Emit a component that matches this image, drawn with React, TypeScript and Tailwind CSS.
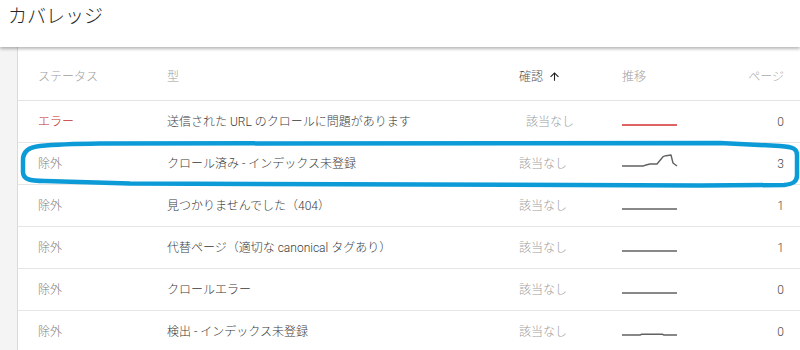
import React from 'react';

const font = { fontFamily: 'Roboto, "Noto Sans CJK JP", sans-serif' };

type Row = {
  status: string;
  error?: boolean;
  type: string;
  pages: string;
  shift?: boolean;
  trend: [number, number][];
};

const flat: [number, number][] = [[0, 15], [55, 15]];

const rows: Row[] = [
  { status: 'エラー', error: true, type: '送信された URL のクロールに問題があります', pages: '0', shift: true, trend: flat },
  {
    status: '除外',
    type: 'クロール済み - インデックス未登録',
    pages: '3',
    trend: [[0, 14], [21, 14], [23, 13.3], [28, 12], [35, 12], [41, 4.7], [44, 3.7], [49, 3], [51, 11], [55, 14]],
  },
  { status: '除外', type: '見つかりませんでした（404）', pages: '1', trend: flat },
  { status: '除外', type: '代替ページ（適切な canonical タグあり）', pages: '1', trend: flat },
  { status: '除外', type: 'クロールエラー', pages: '0', trend: flat },
  {
    status: '除外',
    type: '検出 - インデックス未登録',
    pages: '0',
    trend: [[0, 15], [18, 15], [20, 14.2], [40, 14.2], [42, 15], [55, 15]],
  },
];

const Spark = ({ pts, red }: { pts: [number, number][]; red?: boolean }) => (
  <svg width="56" height="24" viewBox="0 0 56 24" className="block">
    <polyline
      points={pts.map((p) => p.join(',')).join(' ')}
      fill="none"
      stroke={red ? '#d32f2f' : '#616161'}
      strokeWidth="1.4"
      strokeLinejoin="round"
    />
  </svg>
);

const cols = 'grid grid-cols-[149px_352px_103px_1fr_auto] items-center';

export default function App() {
  return (
    <div className="relative w-[800px] h-[350px] overflow-hidden bg-white font-light" style={font}>
      {/* page header */}
      <header className="relative z-10 h-[47px] bg-white shadow-[0_2px_3px_rgba(0,0,0,0.28)] pl-2 pt-[3px]">
        <h1 className="text-[19px] font-light text-[#262626] leading-[28px]">カバレッジ</h1>
      </header>

      <div className="flex h-[303px]">
        <div className="w-[18px] shrink-0 bg-[#f4f4f4] border-r border-[#dadada]" />

        {/* table */}
        <div className="flex-1 bg-white text-[12px]">
          <div className={`${cols} h-[54px] pt-[6px] border-b border-[#e3e3e3] text-[#a0a0a0]`}>
            <div className="pl-5">ステータス</div>
            <div>型</div>
            <div className="flex items-center gap-[5px] text-[#555]">
              確認
              <svg width="13" height="13" viewBox="0 0 24 24" className="text-[#202020]">
                <path fill="currentColor" d="M4 12l1.41 1.41L11 7.83V20h2V7.83l5.58 5.59L20 12l-8-8-8 8z" />
              </svg>
            </div>
            <div>推移</div>
            <div className="pr-4 text-[#aaa]">ページ</div>
          </div>

          {rows.map((r, i) => (
            <div key={i} className={`${cols} h-[42px] border-b border-[#e6e6e6]`}>
              <div className={`pl-5 ${r.error ? 'text-[#c5302a]' : 'text-[#808080]'}`}>{r.status}</div>
              <div className="text-[#3a3a3a]">{r.type}</div>
              <div className={`text-[#9c9c9c] ${r.shift ? 'pl-[7px]' : ''}`}>該当なし</div>
              <div>
                <Spark pts={r.trend} red={r.error} />
              </div>
              <div className="pr-4 text-right text-[#444]">{r.pages}</div>
            </div>
          ))}
        </div>
      </div>

      {/* hand-drawn highlight */}
      <svg className="absolute inset-0 pointer-events-none" width="800" height="350" viewBox="0 0 800 350">
        <path
          d="M40 146 C29 147 23 151 23 160 L23 172 C23 179 29 181 45 181 L130 183.5 L700 185.5 L784 185 C794 184 797 181 797 175 L797 155 C797 149 794 147 780 146 L720 143 L100 143.5 C60 144 50 145 40 146 Z"
          fill="none"
          stroke="#0c9bd7"
          strokeWidth="4.5"
          strokeLinejoin="round"
        />
      </svg>
    </div>
  );
}
